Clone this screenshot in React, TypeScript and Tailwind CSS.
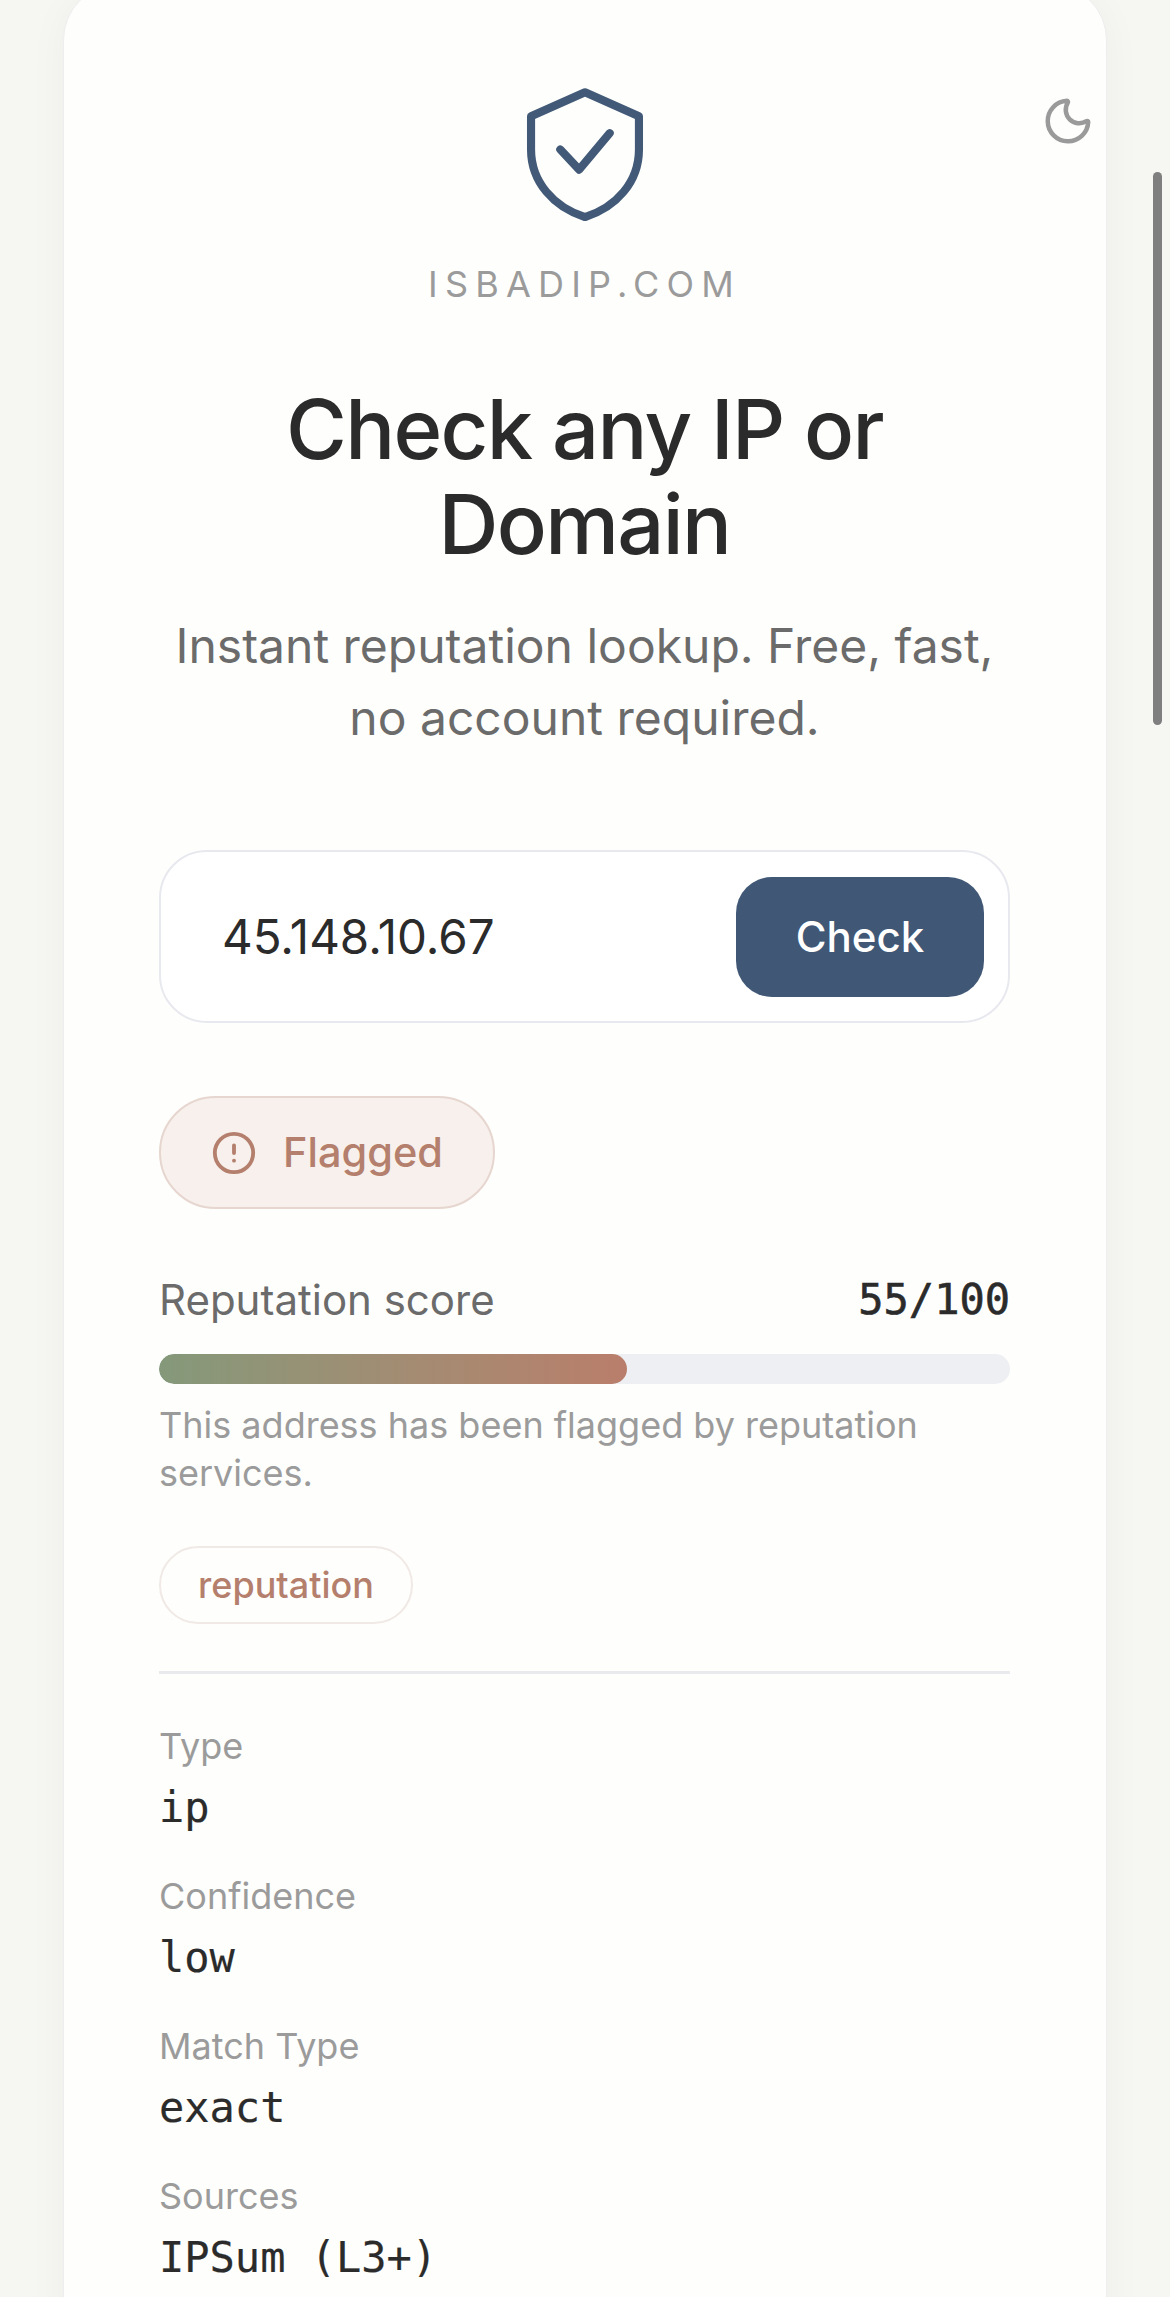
import { Moon, CircleAlert } from "lucide-react";

const rows = [
  { label: "Type", value: "ip" },
  { label: "Confidence", value: "low" },
  { label: "Match Type", value: "exact" },
  { label: "Sources", value: "IPSum (L3+)" },
];

const ShieldLogo = () => (
  <svg viewBox="0 0 24 24" fill="none" stroke="#425a78" strokeWidth="1.25" strokeLinecap="round" strokeLinejoin="round" className="h-[156px] w-[156px]">
    <path d="M12 2.5 L20.3 6.2 V11.3 C20.3 16.3 16.8 20.2 12 21.7 C7.2 20.2 3.7 16.3 3.7 11.3 V6.2 Z" />
    <path d="M8.2 11.3 L11.1 14.4 L15.8 8.8" />
  </svg>
);

export default function App() {
  return (
    <div className="relative h-[2297px] overflow-hidden bg-[#f6f6f2] font-['Inter',sans-serif]">
      <div className="mx-[63px] -mt-[16px] h-[2400px] rounded-[56px] border border-[#eeeef0] bg-[#fefefc] pt-[91px] pr-[96px] pl-[95px] shadow-[0_4px_40px_rgba(0,0,0,0.04)]">
        <div className="flex flex-col items-center">
          <ShieldLogo />
          <div className="mt-[30px] text-[36px] leading-[44px] tracking-[0.2em] text-[#9b9b9b]">ISBADIP.COM</div>
          <h1 className="mt-[76px] text-center text-[83px] leading-[95px] font-medium tracking-[-0.02em] text-[#2b2b2b]">
            Check any IP or
            <br />
            Domain
          </h1>
          <p className="mt-[38px] text-center text-[48px] leading-[72px] text-[#6b6b6b]">
            Instant reputation lookup. Free, fast,
            <br />
            no account required.
          </p>
        </div>

        <div className="mt-[96px] flex h-[173px] items-center justify-between rounded-[48px] border-2 border-[#e8e9ef] bg-white pr-[24px] pl-[61px]">
          <span className="text-[47.5px] text-[#2b2b2b]">45.148.10.67</span>
          <button className="h-[120px] w-[248px] rounded-[36px] bg-[#405876] text-[42px] font-medium text-white">Check</button>
        </div>

        <div className="mt-[73px] inline-flex h-[113px] items-center gap-[26px] rounded-full border-2 border-[#e6d6cf] bg-[#f7f0ec] px-[50px]">
          <CircleAlert size={46} strokeWidth={2} className="text-[#b47f6c]" />
          <span className="text-[41.5px] font-medium text-[#b47f6c]">Flagged</span>
        </div>

        <div className="mt-[59px] flex items-center justify-between">
          <span className="text-[42px] text-[#6b6b6b]">Reputation score</span>
          <span className="font-['DejaVu_Sans_Mono',monospace] text-[42px] font-medium text-[#2b2b2b] [-webkit-text-stroke:0.6px_#2b2b2b]">55/100</span>
        </div>
        <div className="mt-[23px] h-[30px] overflow-hidden rounded-full bg-[#eeeff2]">
          <div className="h-full w-[55%] rounded-full bg-gradient-to-r from-[#84997a] to-[#b97e6b]" />
        </div>
        <p className="mt-[17px] text-[36px] leading-[48px] text-[#9b9b9b]">
          This address has been flagged by reputation
          <br />
          services.
        </p>

        <div className="mt-[49px] inline-flex h-[78px] items-center rounded-full border-2 border-[#f0e9e5] px-[37px] text-[36px] font-medium text-[#b47f6c]">
          reputation
        </div>

        <div className="mt-[47px] border-t-[3px] border-[#e9eaee] pt-[48px]">
          <div className="flex flex-col gap-[30px]">
            {rows.map((row) => (
              <div key={row.label}>
                <div className="text-[36px] leading-[48px] text-[#9b9b9b]">{row.label}</div>
                <div className="mt-[4px] font-['DejaVu_Sans_Mono',monospace] text-[42px] leading-[68px] text-[#2b2b2b] [-webkit-text-stroke:0.2px_#2b2b2b]">{row.value}</div>
              </div>
            ))}
          </div>
        </div>
      </div>

      <button className="absolute top-[94px] right-[75px] text-[#9a9a9a]">
        <Moon size={54} strokeWidth={2} />
      </button>
      <div className="absolute top-[172px] right-[8px] h-[553px] w-[9px] rounded-full bg-[#7f7f7f]" />
    </div>
  );
}
